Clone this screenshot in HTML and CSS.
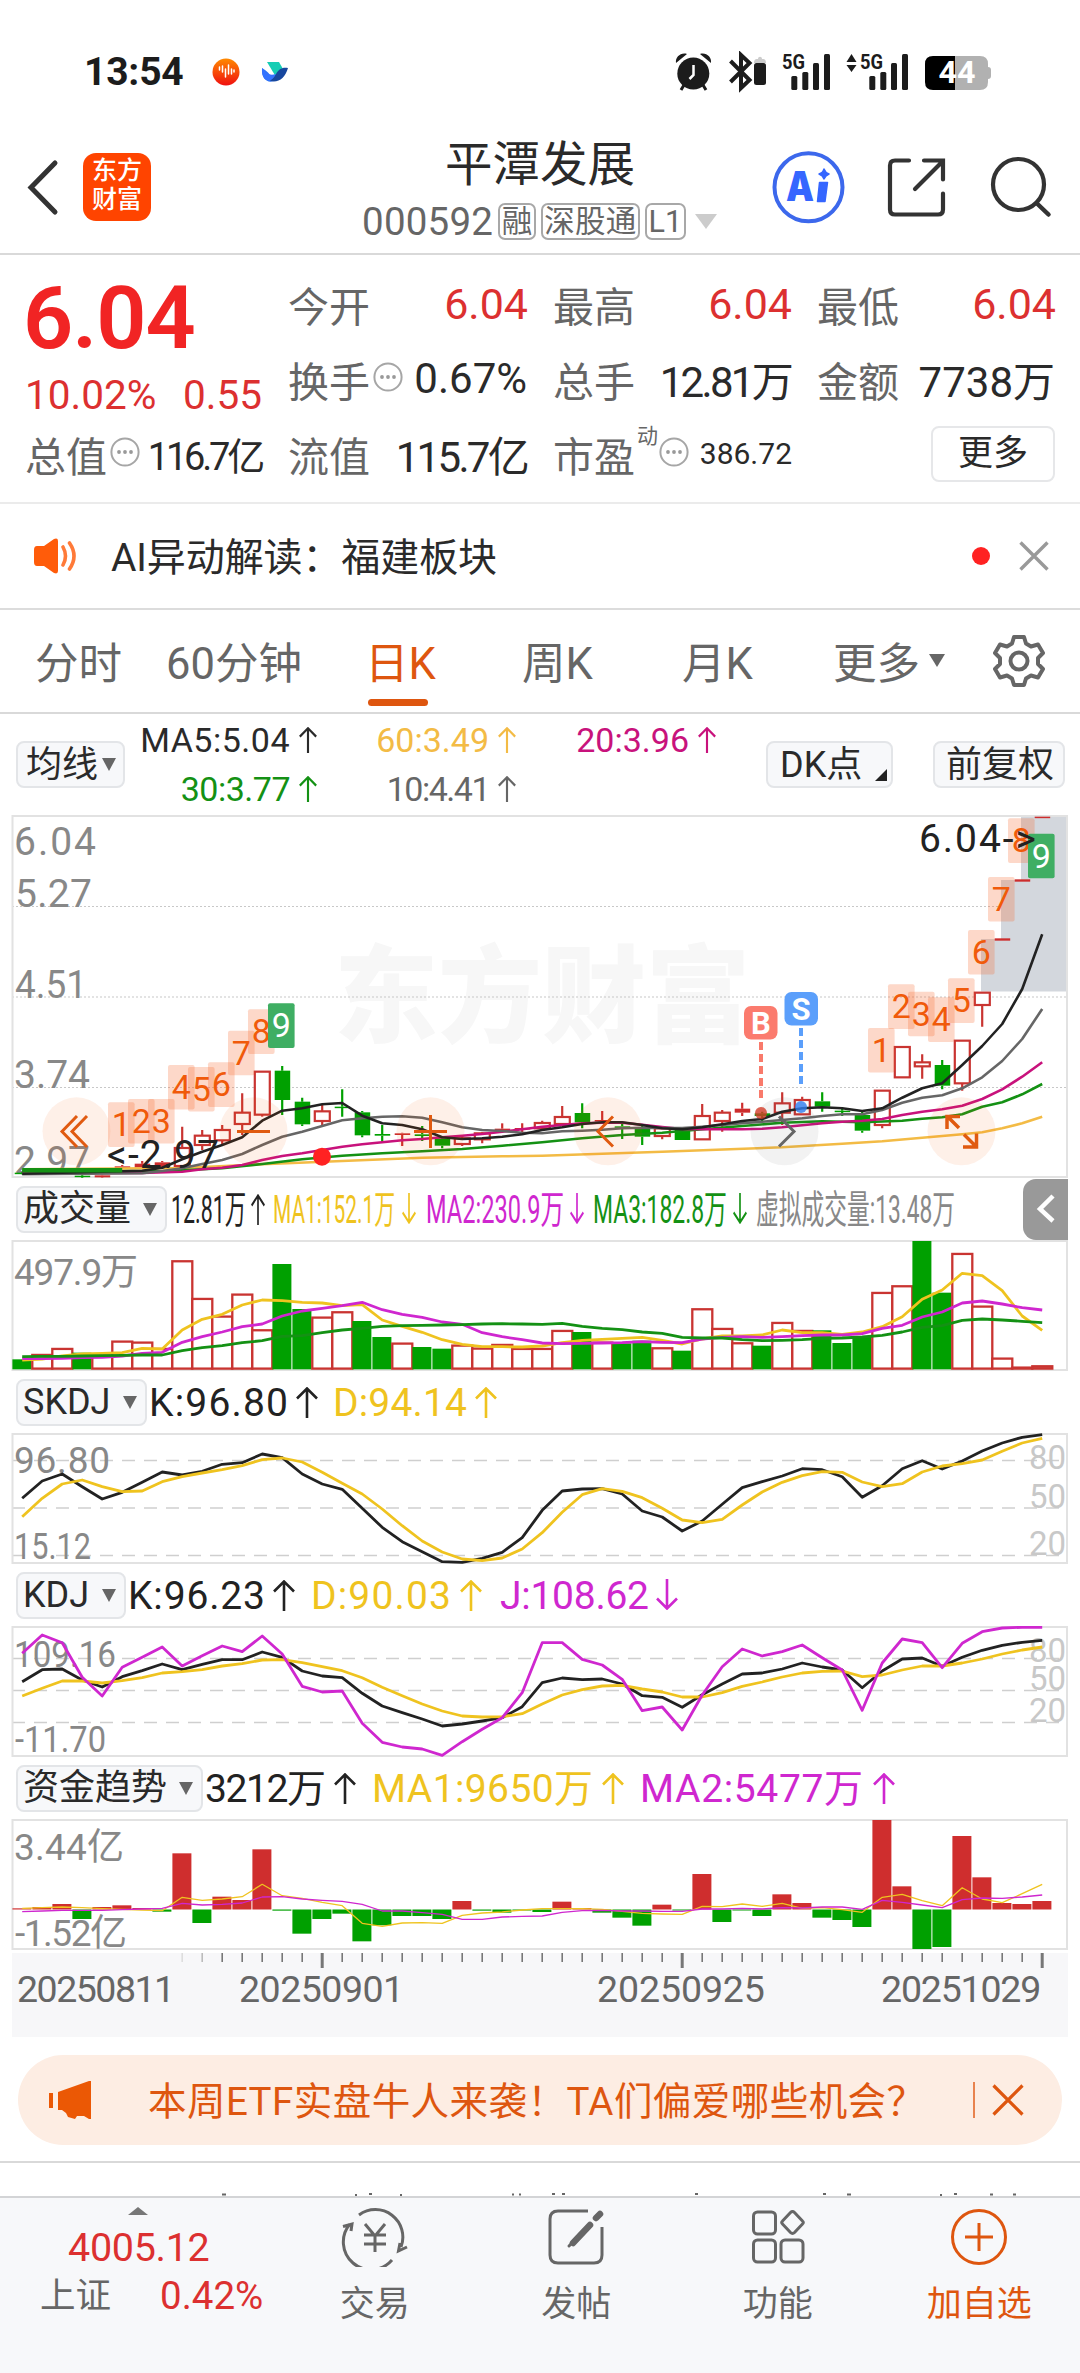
FILE: index.html
```html
<!DOCTYPE html>
<html lang="zh-CN">
<head>
<meta charset="utf-8">
<title>平潭发展 000592</title>
<link rel="stylesheet" href="styles.css">
</head>
<body>
<svg class="defs" width="0" height="0">
  <symbol id="up" viewBox="0 0 22 31" preserveAspectRatio="none"><path d="M11 31V1.5M1 11.5 11 1.5 21 11.5" fill="none" stroke="currentColor" stroke-width="2.6"/></symbol>
  <symbol id="down" viewBox="0 0 22 31" preserveAspectRatio="none"><path d="M11 0V29.5M1 19.5 11 29.5 21 19.5" fill="none" stroke="currentColor" stroke-width="2.6"/></symbol>
  <symbol id="more" viewBox="0 0 30 30"><circle cx="15" cy="15" r="13.6" fill="none" stroke="#a6a6a6" stroke-width="2"/><g fill="#999"><circle cx="9" cy="15" r="1.9"/><circle cx="15" cy="15" r="1.9"/><circle cx="21" cy="15" r="1.9"/></g></symbol>
</svg>

<div class="status">
  <span class="clock">13:54</span>
  <svg class="apps" width="76" height="30" viewBox="212 57 76 30">
    <defs><linearGradient id="g1" x1="0" y1="0" x2="0" y2="1"><stop offset="0" stop-color="#ff8a00"/><stop offset="1" stop-color="#f01010"/></linearGradient></defs>
    <circle cx="226" cy="72" r="13.5" fill="url(#g1)"/>
    <path d="M219.500 67v3M222.500 66v6M225.500 69v8M228.500 65v9M231.500 69v5M234 70v2" stroke="#fff" stroke-width="1.500" stroke-linecap="round"/>
    <path d="M267 62h12l4 7-7 8z" fill="#16cdb4"/><path d="M262 68c5 3 8 6 9 9l4 3c-5 4-14 1-13-12z" fill="#2f74f5"/><path d="M288 68c-6-1-9 1-12 6l-6 7c9 2 15-3 18-13z" fill="#17479e"/><path d="M262 68c4 6 8 8 14 6-3 6-7 8-11 5-3-3-3-7-3-11z" fill="#3372ff"/>
  </svg>
  <svg class="system" width="320" height="42" viewBox="672 51 320 42">
    <g fill="#1c1c1c">
      <circle cx="693.300" cy="73.500" r="16"/><path d="M676 63c-1-6 5-11 11-9zM711 63c1-6-5-11-11-9z"/>
      <path d="M684 85l-3 5M703 85l3 5" stroke="#1c1c1c" stroke-width="3"/>
      <path d="M693.500 65v10l-4 4" fill="none" stroke="#fff" stroke-width="2.500"/>
      <path d="M730.500 61l19 19-8.500 8V55l8.500 8-19 19" fill="none" stroke="#1c1c1c" stroke-width="4"/>
      <rect x="754" y="63" width="12" height="22" rx="2.500"/><path d="M754 63c0-4 2-4 4-4 0-3 4-3 4 0 2 0 4 0 4 4z" fill="#ccc"/>
      <g id="bars"><rect x="791.300" y="76" width="6" height="14" rx="1.500"/><rect x="802.300" y="72" width="6" height="18" rx="1.500"/><rect x="813" y="63" width="6" height="27" rx="1.500"/><rect x="824" y="54" width="6" height="36" rx="1.500"/></g>
      <use href="#bars" x="78"/>
      <path d="M846.500 62l5-8 5 8zM846.500 65h10l-5 7z"/>
      <text x="782" y="68.500" class="net" textLength="23" lengthAdjust="spacingAndGlyphs">5G</text>
      <text x="860" y="68.500" class="net" textLength="23" lengthAdjust="spacingAndGlyphs">5G</text>
    </g>
    <path d="M934 56h46q8 0 8 8v3q3 0 3 3v6q0 3-3 3v3q0 8-8 8h-46z" fill="#b1b1b1"/>
    <path d="M955 56h-22q-8 0-8 8v18q0 8 8 8h22z" fill="#000"/>
    <text x="938.500" y="83" class="battery" textLength="37" lengthAdjust="spacingAndGlyphs">44</text>
  </svg>
</div>

<header class="header">
  <div class="header-left">
    <svg width="34" height="60" viewBox="26 157 34 60"><path d="M55 163 31 187.500 55 212" fill="none" stroke="#333" stroke-width="5" stroke-linecap="round"/></svg>
    <div class="logo">东方<br>财富</div>
  </div>
  <div class="title">
    <h1>平潭发展</h1>
    <div class="code"><span>000592</span><i>融</i><i>深股通</i><i>L1</i><b></b></div>
  </div>
  <svg class="header-icons" width="290" height="76" viewBox="770 149 290 76" fill="none">
    <circle cx="808.500" cy="187.300" r="34" stroke="#3c68ec" stroke-width="4"/>
    <text x="786" y="201" class="ai" textLength="28" lengthAdjust="spacingAndGlyphs">A</text>
    <path d="M819.500 182.500h8l-2.500 19h-7.500zM824 169q1.500 4 5 5-3.500 1.500-5 5-1-3.500-5-5 4-1 5-5z" fill="#3566ff" stroke="#3566ff" stroke-width="1.500" stroke-linejoin="round"/>
    <path d="M909 160.500h-14q-5 0-5 5v44q0 5 5 5h43q5 0 5-5v-16M924 160.500h19v19M942 162l-27 27" stroke="#333" stroke-width="4.200" stroke-linecap="round"/>
    <circle cx="1018.500" cy="184.500" r="25.500" stroke="#333" stroke-width="4.200"/><path d="M1036.500 203l12 11.500" stroke="#333" stroke-width="4.500" stroke-linecap="round"/>
  </svg>
</header>

<section class="quote">
  <div class="price"><strong>6.04</strong><p><span>10.02%</span><span>0.55</span></p></div>
  <div class="cell"><label>今开</label><em class="red">6.04</em></div>
  <div class="cell"><label>最高</label><em class="red">6.04</em></div>
  <div class="cell"><label>最低</label><em class="red">6.04</em></div>
  <div class="cell"><label>换手</label><svg width="30" height="30"><use href="#more"/></svg><em>0.67%</em></div>
  <div class="cell"><label>总手</label><em class="tight">12.81万</em></div>
  <div class="cell"><label>金额</label><em>7738万</em></div>
  <div class="cell"><label>总值</label><svg width="30" height="30"><use href="#more"/></svg><em class="mid">116.7亿</em></div>
  <div class="cell"><label>流值</label><em class="tight">115.7亿</em></div>
  <div class="cell"><label>市盈</label><sup>动</sup><svg width="30" height="30"><use href="#more"/></svg><em class="small">386.72</em></div>
  <div class="cell end"><button class="more-btn">更多</button></div>
</section>

<section class="alert">
  <svg width="46" height="40" viewBox="33 536 46 40"><path d="M37 546h7l10-7q4-1.500 4 2v30q0 3.500-4 2l-10-7h-7q-3 0-3-4v-12q0-4 3-4z" fill="#ff5c0a"/><path d="M63 547q5 9 0 18M69.500 543q9 13 0 26" fill="none" stroke="#ff7a38" stroke-width="3.600" stroke-linecap="round"/></svg>
  <p>AI异动解读：福建板块</p>
  <span class="dot"></span>
  <svg width="30" height="30" viewBox="0 0 30 30"><path d="M1.500 1.500l27 27M28.500 1.500l-27 27" stroke="#999" stroke-width="3.400"/></svg>
</section>

<nav class="tabs">
  <span>分时</span><span>60分钟</span><span class="on">日K</span><span>周K</span><span>月K</span><span>更多<b></b></span>
  <svg width="54" height="54" viewBox="-27 -27 54 54" fill="none" stroke="#666" stroke-width="4"><path d="M-5-24H5L7-17.500 12-14.500 19-16.500 24-8 19-3V3L24 8 19 16.500 12 14.500 7 17.500 5 24H-5L-7 17.500-12 14.500-19 16.500-24 8-19 3V-3L-24-8-19-16.500-12-14.500-7-17.500z" stroke-linejoin="round"/><circle r="8.500"/></svg>
</nav>

<section class="legend">
  <button class="chip">均线<b></b></button>
  <div class="ma">
    <span class="c5">MA5:5.04<svg width="18" height="26"><use href="#up"/></svg></span>
    <span class="c60">60:3.49<svg width="18" height="26"><use href="#up"/></svg></span>
    <span class="c20">20:3.96<svg width="18" height="26"><use href="#up"/></svg></span>
    <span class="c30">30:3.77<svg width="18" height="26"><use href="#up"/></svg></span>
    <span class="c10">10:4.41<svg width="18" height="26"><use href="#up"/></svg></span>
  </div>
  <button class="chip dk">DK点<u></u></button>
  <button class="chip">前复权</button>
</section>

<svg class="chart" id="kline" width="1080" height="363" viewBox="0 0 1080 363">
  <text x="334" y="219" class="watermark" textLength="416" lengthAdjust="spacingAndGlyphs">东方财富</text>
  <path d="M12 91.500H1067M12 182H1067M12 272.500H1067" class="dotted"/>
  <path d="M981 176.500V124H1001V65H1021V1H1067V176.500z" fill="#d3d7dd"/>
  <rect x="12.500" y="1" width="1054.500" height="361" class="frame"/>
  <g class="axis"><text x="14" y="39.500" textLength="82">6.04</text><text x="15" y="92" textLength="77">5.27</text><text x="15" y="182.500" textLength="72" lengthAdjust="spacingAndGlyphs">4.51</text><text x="14" y="273" textLength="76">3.74</text><text x="14" y="359" textLength="76">2.97</text></g>
  <g id="candles"></g>
  <g id="averages"></g>
  <g fill="#f05a00" fill-opacity=".09"><circle cx="76.500" cy="316.300" r="34"/><circle cx="253.500" cy="316.300" r="34"/><circle cx="430.500" cy="316.300" r="34"/><circle cx="608" cy="316.300" r="34"/><circle cx="784.500" cy="316.300" r="34" fill="#555" fill-opacity=".08"/><circle cx="961.500" cy="316.300" r="34"/></g>
  <g fill="none" stroke="#e05a10" stroke-width="3"><path d="M77 301 62 316.500 77 332M87 301 72 316.500 87 332M237 316.500h33M414 316.500h33M430.500 300v33M613 301.500 598 316.500 613 331.500"/><path d="M779 301.500 794 316.500 779 331.500" stroke="#666"/><path d="M959 313 947 301M947 314V301.500H960M964 319.500 976.500 332M963 332H976.500V318.500" stroke-width="3.500"/></g>
  <circle cx="322" cy="341.700" r="9" fill="#f22"/>
  <g id="counts"></g>
  <text x="107" y="353" class="mark" textLength="112">&lt;-2.97</text>
  <text x="919" y="37" class="mark" textLength="117">6.04-&gt;</text>
  <path d="M761 227V286" stroke="#f97a6b" stroke-width="4" stroke-dasharray="8 4"/><path d="M801 213V270" stroke="#5b9ffb" stroke-width="4" stroke-dasharray="8 4"/>
  <circle cx="761" cy="298" r="6" fill="#d33c28" fill-opacity=".8"/><circle cx="801" cy="292" r="6" fill="#2f7df0" fill-opacity=".8"/>
  <rect x="744" y="191" width="33.500" height="33.500" rx="7" fill="#fb7b6e"/><rect x="784.500" y="177" width="33.500" height="33.500" rx="7" fill="#5b9ffb"/>
  <text x="761" y="218.500" class="bs">B</text><text x="801" y="204.500" class="bs">S</text>
</svg>

<div class="row">
  <button class="chip w151">成交量<b></b></button>
  <svg width="856" height="62" viewBox="167 0 856 62" class="readout">
    <text x="171" y="44.500" textLength="75" lengthAdjust="spacingAndGlyphs">12.81万</text><use href="#up" x="251" y="16" width="14" height="31"/>
    <g class="y"><text x="273" y="44.500" textLength="122" lengthAdjust="spacingAndGlyphs">MA1:152.1万</text><use href="#down" x="402" y="15" width="14" height="31"/></g>
    <g class="m"><text x="426" y="44.500" textLength="138" lengthAdjust="spacingAndGlyphs">MA2:230.9万</text><use href="#down" x="570" y="15" width="14" height="31"/></g>
    <g class="g"><text x="593" y="44.500" textLength="134" lengthAdjust="spacingAndGlyphs">MA3:182.8万</text><use href="#down" x="733" y="15" width="14" height="31"/></g>
    <text x="756" y="44.500" fill="#888" textLength="199" lengthAdjust="spacingAndGlyphs">虚拟成交量:13.48万</text>
  </svg>
  <div class="fold"><svg width="20" height="32" viewBox="0 0 20 32"><path d="M17 3 4 16 17 28" fill="none" stroke="#fff" stroke-width="4.500"/></svg></div>
</div>
<svg class="chart" id="volume" width="1080" height="131" viewBox="0 0 1080 131">
  <rect x="12.500" y="1" width="1054.500" height="129" class="frame"/>
  <g class="axis small"><text x="14" y="44.500" textLength="124">497.9万</text></g>
  <g id="vbars"></g><g id="vlines"></g>
</svg>

<div class="row">
  <button class="chip w131">SKDJ<b></b></button>
  <svg width="856" height="62" viewBox="147 0 856 62" class="readout">
    <text x="149" y="44.500" textLength="139">K:96.80</text><use href="#up" x="296" y="16" width="22" height="31"/>
    <g class="y"><text x="333" y="44.500" textLength="134">D:94.14</text><use href="#up" x="475" y="16" width="22" height="31"/></g>
  </svg>
</div>
<svg class="chart" id="skdj" width="1080" height="131" viewBox="0 0 1080 131">
  <path d="M12 27.500H1067M12 75H1067M12 122.500H1067" class="dashed"/>
  <rect x="12.500" y="1" width="1054.500" height="129" class="frame"/>
  <g class="axis small"><text x="14" y="40" textLength="96">96.80</text><text x="14" y="126" textLength="77" lengthAdjust="spacingAndGlyphs">15.12</text></g>
  <g class="levels"><text x="1066" y="36">80</text><text x="1066" y="75">50</text><text x="1066" y="122">20</text></g>
  <g class="plot"></g>
</svg>

<div class="row">
  <button class="chip w110">KDJ<b></b></button>
  <svg width="856" height="62" viewBox="126 0 856 62" class="readout">
    <text x="128" y="44.500" textLength="137">K:96.23</text><use href="#up" x="273" y="16" width="22" height="31"/>
    <g class="y"><text x="311" y="44.500" textLength="140">D:90.03</text><use href="#up" x="460" y="16" width="22" height="31"/></g>
    <g class="m"><text x="500" y="44.500" textLength="149">J:108.62</text><use href="#down" x="656" y="15" width="22" height="31"/></g>
  </svg>
</div>
<svg class="chart" id="kdj" width="1080" height="131" viewBox="0 0 1080 131">
  <path d="M12 32.500H1067M12 64.500H1067M12 96.500H1067" class="dashed"/>
  <rect x="12.500" y="1" width="1054.500" height="129" class="frame"/>
  <g class="axis small"><text x="14" y="40.500" textLength="102" lengthAdjust="spacingAndGlyphs">109.16</text><text x="15" y="126" textLength="91" lengthAdjust="spacingAndGlyphs">-11.70</text></g>
  <g class="levels"><text x="1066" y="36">80</text><text x="1066" y="64">50</text><text x="1066" y="96">20</text></g>
  <g class="plot"></g>
</svg>

<div class="row">
  <button class="chip w187">资金趋势<b></b></button>
  <svg width="856" height="62" viewBox="203 0 856 62" class="readout">
    <text x="205" y="44.500" textLength="121">3212万</text><use href="#up" x="334" y="16" width="22" height="31"/>
    <g class="y"><text x="372" y="44.500" textLength="221">MA1:9650万</text><use href="#up" x="602" y="16" width="22" height="31"/></g>
    <g class="m"><text x="640" y="44.500" textLength="223">MA2:5477万</text><use href="#up" x="873" y="16" width="22" height="31"/></g>
  </svg>
</div>
<svg class="chart" id="fund" width="1080" height="131" viewBox="0 0 1080 131">
  <rect x="12.500" y="1" width="1054.500" height="129" class="frame"/>
  <g class="axis small"><text x="14" y="40.500" textLength="110">3.44亿</text><text x="15" y="127" textLength="112">-1.52亿</text></g>
  <g class="plot"></g>
</svg>

<div class="timeline">
  <svg width="1056" height="16" viewBox="12 0 1056 16" id="ticks"></svg>
  <div class="dates"><span>20250811</span><span>20250901</span><span>20250925</span><span>20251029</span></div>
</div>

<div class="banner">
  <svg width="46" height="40" viewBox="48 2079 46 40"><path d="M91 2080v38h-2l-5-3h-7l-2 3-7-2-2-4-4-3h-4v-18l31-11zM49 2092h4v15h-4z" fill="#eb5805"/></svg>
  <p>本周ETF实盘牛人来袭！TA们偏爱哪些机会？</p>
  <i></i>
  <svg width="32" height="32" viewBox="0 0 32 32"><path d="M1.500 1.500l29 29M30.500 1.500l-29 29" stroke="#de560f" stroke-width="3.200"/></svg>
</div>

<div class="peek"><svg width="1080" height="3"><path d="M222 1.500h4M355 2h2M369 1h3M400 2h2M512 1.500h2M519 1.500h2M552 1h3M562 1h3M695 1h3M823 1h3M847 1.500h4M940 2h2M954 1h3M990 1.500h3M1013 1.500h3" stroke="#666" stroke-width="2"/></svg></div>

<footer class="bar">
  <div class="index">
    <b></b>
    <strong>4005.12</strong>
    <p><span>上证</span><em>0.42%</em></p>
  </div>
  <div class="item"><svg width="68" height="60" viewBox="-34 -30 68 60" fill="none" stroke="#666" stroke-width="3"><path d="M-16-22A27.500 27.500 0 0 1 26 10M17 23A27.500 27.500 0 0 1-25-13M-32-10.500-23-13-24-6M32 10 23.500 14 25 6M-10-13 0-1 10-13M-11-2h22M-11 7h22M0-1V15"/></svg>交易</div>
  <div class="item"><svg width="68" height="60" viewBox="-34 -30 68 60" fill="none" stroke="#666" stroke-width="3"><path d="M12-26H-18q-8 0-8 8v36q0 8 8 8h36q8 0 8-8V-10"/><path d="M20-19 24-23M14-12-3 6" stroke-width="6.500" stroke-linecap="round"/><path d="M-1 3-7 9" stroke-width="3" stroke-linecap="round"/></svg>发帖</div>
  <div class="item"><svg width="68" height="60" viewBox="-34 -30 68 60" fill="none" stroke="#666" stroke-width="3"><rect x="-24.500" y="-25" width="22" height="22" rx="4"/><rect x="-24.500" y="3" width="22" height="22" rx="4"/><rect x="3" y="3" width="22" height="22" rx="4"/><path d="M14.500-25.500q1 0 2 1l8 8.500q1.500 1.500 0 3l-8 8.500q-2 2-4 0l-8-8.500q-1.500-1.500 0-3l8-8.500q1-1 2-1z"/></svg>功能</div>
  <div class="item hot"><svg width="68" height="60" viewBox="-34 -30 68 60" fill="none" stroke="#de560f" stroke-width="3"><circle r="26.500"/><path d="M-14 0H14M0-14V14"/></svg>加自选</div>
</footer>
<script src="charts.js"></script>
</body>
</html>
```
FILE: styles.css
```css
* { box-sizing: border-box; }
body {
  margin: 0;
  width: 1080px;
  height: 2373px;
  overflow: hidden;
  background: #fff;
  color: #2a2a2a;
  font-family: Roboto, "Noto Sans CJK SC", sans-serif;
}
h1, p { margin: 0; }
svg { display: block; flex: none; }
em, i { font-style: normal; }
button { font: inherit; color: inherit; margin: 0; }
.defs { height: 0; }

.status { height: 120px; padding: 24px 88px 0 84px; display: flex; align-items: center; }
.clock { font-size: 39px; font-weight: 700; letter-spacing: -.2px; width: 128px; color: #1c1c1c; }
.system { margin-left: auto; }
.net { font-size: 20px; font-weight: 700; }
.battery { font-size: 32px; font-weight: 700; fill: #fff; }

.header { height: 135px; border-bottom: 2px solid #d9d9d9; display: grid; grid-template-columns: 300px 1fr 310px; align-items: center; }
.header-left { display: flex; align-items: center; gap: 23px; padding-left: 26px; }
.logo { width: 68px; height: 68px; border-radius: 13px; background: #ff4400; color: #fff; font-size: 25px; line-height: 29px; font-weight: 500; text-align: center; padding-top: 3px; }
.title { display: flex; flex-direction: column; align-items: center; }
.title h1 { font-size: 47.500px; font-weight: 400; line-height: 60px; margin-top: 9px; padding-left: 10px; }
.code { display: flex; align-items: center; gap: 5px; height: 52px; font-size: 38.500px; color: #666; padding-left: 9px; letter-spacing: .2px; }
.code i { border: 2px solid #a8a8a8; border-radius: 7px; font-size: 30.500px; line-height: 33px; height: 37px; padding: 0 1.500px; }
.code b { border: 11px solid transparent; border-top: 15px solid #ccc; border-bottom: 0; margin-left: 4px; }
.ai { font-family: Inter, Roboto, sans-serif; font-weight: 900; font-size: 41px; fill: #3566ff; }

.quote { height: 249px; padding: 11px 25px 0; border-bottom: 2px solid #ebebeb; display: grid; grid-template-columns: 237px 239px 238px 238px; column-gap: 26px; grid-template-rows: 75px 75px 75px; }
.price { grid-row: span 2; color: #f12424; }
.price strong { display: block; font-size: 88px; font-weight: 600; line-height: 104px; letter-spacing: -1px; margin-left: -2px; }
.price p { display: flex; justify-content: space-between; font-size: 40.500px; line-height: 50px; color: #dc3030; }
.cell { display: flex; align-items: center; font-size: 42px; white-space: nowrap; }
.cell label { color: #666; font-size: 41px; }
.cell > svg { margin: -3px 0 0 3px; }
.cell em { margin-left: auto; }
.cell .red { color: #dc3030; font-size: 43px; margin-right: -1px; }
.cell .tight { letter-spacing: -2.700px; margin-right: 0; }
.cell .mid { font-size: 38px; letter-spacing: -3.200px; margin-right: 0; }
.cell .small { font-size: 30px; margin-right: -1px; }
.cell sup { font-size: 21px; line-height: 22px; color: #666; align-self: flex-start; margin: 9px 0 0 2px; }
.cell sup + svg { margin-left: 1px; }
.end { justify-content: flex-end; }
.more-btn { width: 124px; height: 56px; border: 2px solid #e6e7e9; border-radius: 8px; background: #fff; font-size: 35px; line-height: 48px; padding: 0; }

.alert { height: 106px; border-bottom: 2px solid #dcdcdc; display: flex; align-items: center; padding: 0 31px 0 33px; }
.alert p { font-size: 39px; margin-left: 32px; letter-spacing: -.1px; padding-bottom: 4px; }
.dot { width: 18px; height: 18px; border-radius: 50%; background: #f22; margin: 0 29px 0 auto; }

.tabs { height: 104px; border-bottom: 2px solid #d9d9d9; padding-left: 35px; display: grid; grid-template-columns: 131px 202px 154px 160px 151px 159px 60px; align-items: center; font-size: 43.500px; color: #666; }
.tabs span { display: flex; align-items: center; height: 102px; padding-bottom: 2px; }
.tabs .on { color: #de560f; position: relative; text-indent: -3px; }
.tabs .on::after { content: ""; position: absolute; left: 0; bottom: 6px; width: 60px; height: 7px; border-radius: 4px; background: #de560f; }
.tabs b { border: 8px solid transparent; border-top: 13px solid #666; border-bottom: 0; margin-left: 9px; }

.legend { height: 101px; display: flex; align-items: center; padding-left: 16px; }
.chip { height: 47px; border: 2px solid #e3e5e8; border-radius: 8px; background: #f7f8fa; font-size: 36px; line-height: 40px; padding: 0 7px 0 5px; display: flex; align-items: center; justify-content: space-between; white-space: nowrap; }
.chip b { border: 7.500px solid transparent; border-top: 13px solid #666; border-bottom: 0; }
.legend .chip { width: 132px; padding: 0 11px; }
.legend .chip:first-child { width: 109px; padding: 0 7px 0 8px; }
.legend .chip b { margin-left: -1px; }
.legend .dk { width: 127px; padding: 0 4px 0 12px; margin: 0 40px 0 50px; }
.chip u { border: 6px solid #222; border-top-color: transparent; border-left-color: transparent; align-self: flex-end; margin-bottom: 5px; }
.ma { display: grid; grid-template-columns: 192px 199px 200px; grid-auto-rows: 49px; font-size: 34px; }
.ma span { display: flex; justify-content: flex-end; align-items: center; gap: 9px; }
.ma .c5 { letter-spacing: .5px; }
.c60 { color: #f3bb45; }
.c20 { color: #c8127c; }
.c30 { color: #149114; }
.ma .c30 { letter-spacing: -.5px; }
.c10 { color: #666; }
.ma .c10 { letter-spacing: -1.500px; }

.chart text, .readout text { font-size: 39px; }
.frame { fill: none; stroke: #e2e2e2; stroke-width: 2; }
.dotted { stroke: #c8c8c8; stroke-width: 1.200; stroke-dasharray: 2 2; }
.dashed { stroke: #cfcfcf; stroke-width: 1.500; stroke-dasharray: 13 9; }
.axis { fill: #888; }
.chart .small text { font-size: 37px; }
.chart .levels text { font-size: 33px; fill: #c8c8c8; text-anchor: end; }
.chart .watermark { font-size: 106px; font-weight: 900; fill: #f7f7f7; }
.mark { fill: #222; }
.chart .bs { font-size: 31px; font-weight: 700; fill: #fff; text-anchor: middle; }
.chart .count { font-size: 34px; fill: #f05a0a; text-anchor: middle; }
.chart .last { fill: #fff; }

.row { height: 62px; padding-left: 16px; display: flex; align-items: center; }
.row .chip b { margin-right: 1px; }
.w151 { width: 151px; }
.w131 { width: 131px; }
.w110 { width: 110px; }
.w187 { width: 187px; }
.readout { fill: #222; color: #222; }
.y { fill: #efc31f; color: #efc31f; }
.m { fill: #cf27cf; color: #cf27cf; }
.g { fill: #149114; color: #149114; }
.fold { width: 45px; height: 61px; border-radius: 13px 0 0 13px; background: #999; display: flex; align-items: center; justify-content: center; }

.timeline { width: 1056px; height: 84px; margin: 3px 0 0 12px; background: #f7f7f9; }
.dates { display: grid; grid-template-columns: 222px 358px 284px 1fr; font-size: 37.500px; line-height: 40px; color: #666; padding-left: 5px; letter-spacing: -.1px; }
.dates span:first-child { letter-spacing: -1.500px; }
.dates span:nth-child(2) { letter-spacing: -.5px; }
.dates span:last-child { letter-spacing: -1.200px; }

.banner { height: 90px; margin: 18px 18px 0; border-radius: 45px; background: #fdede3; color: #de560f; display: flex; align-items: center; padding: 0 38px 0 30px; }
.banner p { font-size: 38.500px; margin-left: 54px; white-space: nowrap; letter-spacing: .45px; padding-bottom: 4px; }
.banner i { width: 2px; height: 36px; background: #de560f; opacity: .7; margin: 0 17px 0 auto; }

.peek { height: 37px; margin-top: 16px; border-top: 2px solid #d9d9d9; border-bottom: 2px solid #d3d4d6; display: flex; align-items: flex-end; }
.bar { height: 175px; background: #f7f8fa; display: grid; grid-template-columns: 274px repeat(4, 201.500px); }
.index { padding-top: 9px; color: #dc3030; }
.index b { display: block; width: 0; border: 10px solid transparent; border-bottom: 8px solid #777; border-top: 0; margin-left: 128px; }
.index strong { display: block; font-size: 39.500px; font-weight: 400; line-height: 46px; margin: 10px 0 0 68px; letter-spacing: -.3px; }
.index p { display: flex; align-items: center; gap: 49px; font-size: 38.500px; line-height: 50px; padding-left: 40px; }
.index span { font-size: 35.500px; color: #666; }
.item { display: flex; flex-direction: column; align-items: center; padding-top: 9px; font-size: 35px; line-height: 50px; color: #666; gap: 13px; }
.hot { color: #de560f; }
```
FILE: charts.js
```js
const NS = 'http://www.w3.org/2000/svg';
const RED = '#c93431', FILL_RED = '#cd2d2d', GREEN = '#00a000';
const X = i => 22.2 + 20 * i;

function add(parent, name, attrs, text) {
  const el = document.createElementNS(NS, name);
  for (const k in attrs) el.setAttribute(k, attrs[k]);
  if (text) el.textContent = text;
  parent.appendChild(el);
}

// Series are "index:value" or plain values; plain values continue from the previous index.
function line(parent, data, base, color, width) {
  let i = -1;
  const pts = data.split(' ').map(t => {
    const [a, b] = t.split(':');
    i = b ? +a : i + 1;
    return X(i) + ',' + (+(b || a) / 3 - base).toFixed(1);
  });
  add(parent, 'polyline', { points: pts.join(' '), fill: 'none', stroke: color, 'stroke-width': width, 'stroke-linejoin': 'round' });
}

// Candles: direction (r hollow, R filled, g green), high, body top, body bottom, low.
const candles = `g 1116 1118 1121 1123|r 1116 1117 1120 1122|r 1115 1116 1120 1122|g 1118 1127 1130 1133|R 1124 1126 1132 1133|R 1095 1099 1105 1107|R 1083 1091 1103 1105|R 1083 1087 1103 1105|r 980 1044 1098 1105|r 990 1007 1035 1050|r 975 990 1021 1035|r 880 938 972 1005|r 815 815 944 950|g 798 812 900 945|g 893 905 973 978|r 915 934 963 975|g 868 920 923 950|g 933 937 1006 1012|g 975 1002 1007 1025|R 998 1000 1005 1038|g 978 1003 1008 1023|g 1010 1015 1037 1045|r 1008 1015 1032 1038|r 997 1000 1018 1030|R 970 986 990 990|R 970 984 988 1000|r 962 969 985 990|r 918 951 972 978|g 910 939 967 985|R 933 960 964 970|g 968 979 983 1017|g 975 987 1010 1035|r 980 985 1008 1018|g 985 990 1020 1020|r 912 948 1018 1020|r 930 938 963 995|R 908 926 938 948|g 935 940 948 965|r 877 910 938 975|r 890 900 943 945|g 877 904 920 935|g 923 932 935 948|g 935 945 992 998|r 870 872 975 985|r 740 741 832 832|r 763 787 799 836|g 780 795 857 868|r 720 722 850 872|r 577 578 615 680|R 415 415 422 422|R 238 238 245 245|R 50 50 53 53`;
const cg = document.getElementById('candles');
candles.split('|').forEach((c, i) => {
  const [d, ...v] = c.split(' ');
  const [h, t, b, l] = v.map(n => n / 3 - 15);
  const color = d === 'g' ? GREEN : d === 'R' ? FILL_RED : RED;
  add(cg, 'path', { d: `M${X(i)} ${h}V${t}M${X(i)} ${b}V${l}`, stroke: color, 'stroke-width': 2.2 });
  if (d === 'r') add(cg, 'rect', { x: X(i) - 7.4, y: t, width: 15, height: b - t, fill: '#fff', stroke: RED, 'stroke-width': 2.2 });
  else add(cg, 'rect', { x: X(i) - 7.5, y: t, width: 15.5, height: Math.max(b - t, 1.5), fill: color });
});

const av = document.getElementById('averages');
line(av, '0:1108 8:1104 12:1093 16:1083 20:1073 24:1069 26:1067 32:1055 38:1042 41:1031 43:1024 45:1013 47:1003 48:997 985 970 950', 15, '#f3bb45', 2.6);
line(av, '0:1112 7:1114 8:1111 10:1105 12:1092 14:1078 16:1067 18:1060 20:1054 22:1047 24:1037 26:1027 28:1015 30:1005 32:998 34:988 36:978 38:968 40:964 42:967 44:962 45:956 46:952 47:943 48:920 907 883 852', 15, '#149114', 2.6);
line(av, '0:1119 6:1119 8:1115 9:1108 10:1103 1095 1080 1068 1060 1050 1040 1033 1027 1021 1017 1012 1007 1002 995 988 980 975 970 968 968 974 981 987 988 988 988 986 982 976 970 965 962 957 945 935 928 917 897 868 830 787', 15, '#c8127c', 2.6);
line(av, '0:1123 6:1120 1113 1105 1092 1080 1062 1035 1010 995 978 961 955 950 949 953 967 982 990 993 998 1000 994 992 989 985 983 984 984 980 975 970 965 960 955 948 943 943 930 908 893 886 865 832 783 717 627', 15, '#666', 2.6);
line(av, '0:1121 6:1112 1103 1078 1055 1035 1012 962 932 925 913 909 947 970 975 988 1012 1017 1015 1010 1003 990 982 972 967 967 975 985 988 982 973 963 957 935 925 922 925 933 925 893 865 850 795 738 672 567 403', 15, '#222', 2.6);
line(av, '0:1111 5:1111', 15, '#149114', 4.5);

const counts = document.getElementById('counts');
[[5, 1, 907], [6, 2, 897], [7, 3, 897], [8, 4, 795], [9, 5, 801], [10, 6, 787], [11, 7, 692], [12, 8, 628], [13, 9, 610],
 [43, 1, 684], [44, 2, 553], [45, 3, 575], [46, 4, 592], [47, 5, 535], [48, 6, 390], [49, 7, 231], [50, 8, 55], [51, 9, 101]].forEach(([i, n, v]) => {
  const y = v / 3 - 15, last = n === 9;
  add(counts, 'rect', { x: X(i) - 14.2, y, width: 26.6, height: 44.6, rx: 2, fill: last ? '#3fae63' : '#f86428', 'fill-opacity': last ? 1 : .25 });
  add(counts, 'text', { x: X(i) - 1, y: y + 34, class: last ? 'count last' : 'count' }, String(n));
});

const vol = 'g418 r403 r385 g398 r405 r363 r366 r385 r122 r235 r288 r222 r329 g132 g267 r291 r275 g303 g351 r369 g381 g386 r375 r384 r373 r385 r385 r331 g336 r366 g370 g362 r383 g392 r266 r325 r368 g377 r307 r331 g331 g369 g348 r217 r197 g63 g218 r100 r258 r414 r441 r437';
const vb = document.getElementById('vbars');
vol.split(' ').forEach((t, i) => {
  const y = +t.slice(1) / 3 - 20;
  if (t[0] === 'g') add(vb, 'rect', { x: X(i) - 9.8, y, width: 19, height: 129.3 - y, fill: GREEN });
  else add(vb, 'rect', { x: X(i) - 9.9, y: y + .6, width: 20, height: 128 - y, fill: '#fff', stroke: RED, 'stroke-width': 2.3 });
});
const vl = document.getElementById('vlines');
line(vl, '420 417 408 402 400 398 385 387 330 298 283 255 240 242 247 249 257 254 300 319 337 359 373 380 380 381 378 368 361 358 355 352 361 372 357 348 348 345 330 338 338 343 336 320 290 238 210 160 167 212 288 331', 20, '#efc31f', 2.8);
line(vl, '416 416 415 413 412 408 400 397 367 350 336 320 312 288 273 265 257 247 269 283 292 306 313 338 350 359 369 371 370 369 368 365 367 368 357 352 350 352 350 347 345 345 341 325 316 291 276 249 243 252 263 270', 20, '#cf27cf', 2.8);
line(vl, '410 409 409 408 407 406 405 405 392 383 377 368 362 349 347 338 330 325 319 317 316 315 314 312 311 312 313 310 319 325 329 336 340 352 354 354 359 362 361 359 355 354 351 346 336 322 317 301 297 300 304 308', 20, '#149114', 2.8);

const sk = document.querySelector('#skdj .plot');
line(sk, '835 783 762 800 837 817 787 756 765 754 733 728 702 713 762 792 808 865 922 965 995 1025 1027 1015 997 953 871 813 807 806 822 873 891 933 903 853 803 785 768 746 749 770 832 797 746 722 747 723 693 669 652 644', 213, '#222', 2.8);
line(sk, '890 835 792 780 800 815 813 785 770 759 749 737 719 714 726 757 790 822 867 917 963 996 1017 1022 1014 987 938 877 824 806 814 833 865 900 908 898 855 816 787 767 755 757 786 800 791 756 738 731 720 694 669 655', 213, '#efc31f', 2.8);

const kd = document.querySelector('#kdj .plot');
line(kd, '335 299 297 330 351 320 302 282 299 283 269 269 246 262 303 318 323 370 408 428 447 468 462 453 443 410 338 324 329 327 342 377 382 412 374 342 312 309 297 279 291 300 353 303 267 264 289 262 241 226 217 211', 56, '#222', 2.8);
line(kd, '378 355 333 333 339 332 323 309 305 299 288 281 270 269 278 290 302 323 352 377 402 423 438 441 440 431 402 375 359 348 346 357 366 381 381 368 349 336 321 309 304 303 320 315 300 288 288 279 267 252 240 231', 56, '#efc31f', 2.8);
line(kd, '250 195 218 322 378 292 262 231 288 257 228 245 198 252 349 366 363 460 517 531 537 556 515 478 443 368 218 218 268 285 328 422 411 480 375 290 237 258 245 225 263 300 421 279 207 218 293 220 185 174 172 172', 56, '#cf27cf', 2.8);

const fu = document.querySelector('#fund .plot');
'415 411 402 447 411 406 414 425 250 459 380 390 238 422 491 447 431 514 466 438 438 447 393 422 428 419 426 395 414 428 443 467 404 421 312 456 421 438 373 399 443 450 471 150 349 537 531 198 322 399 402 393'.split(' ').forEach((v, i) => {
  const y = v / 3 - 49, z = 418.5 / 3 - 49;
  add(fu, 'rect', { x: X(i) - 9.8, y: Math.min(y, z), width: 19, height: Math.max(Math.abs(y - z), 1), fill: y < z ? '#cf2e2e' : GREEN });
});
line(fu, '415 413 411 413 416 418 420 422 382 391 387 380 343 377 385 397 407 460 469 459 458 460 436 429 426 420 416 416 416 418 424 430 432 433 409 410 402 409 400 415 413 419 427 382 373 392 407 353 387 398 371 343', 49, '#efc31f', 1.3);
line(fu, '425 423 421 421 421 419 417 415 400 405 403 399 381 380 387 391 394 403 423 423 428 433 448 448 441 439 438 427 422 421 423 423 424 424 417 417 415 417 413 414 411 411 418 391 397 405 413 389 384 385 381 375', 49, '#cf27cf', 1.3);

const ticks = document.getElementById('ticks');
for (let i = 8; i < 52; i++) {
  const major = i === 15 || i === 33 || i === 51;
  add(ticks, 'path', { d: `M${X(i)} 0V${major ? 15 : 9}`, stroke: i === 8 ? '#ddd' : i === 9 ? '#bbb' : '#777', 'stroke-width': major ? 3 : 1.6 });
}
```
